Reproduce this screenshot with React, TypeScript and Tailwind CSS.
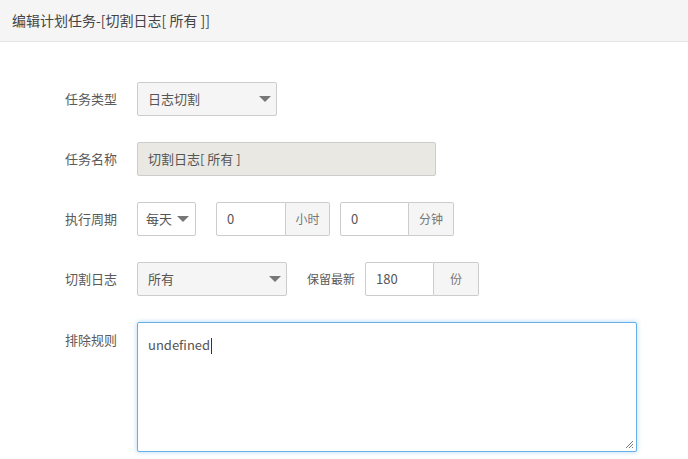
import React from "react";

const font = { fontFamily: '"Noto Sans CJK SC", "Open Sans", sans-serif' };

function Caret() {
  return (
    <svg width="12" height="6" viewBox="0 0 12 6" className="shrink-0">
      <path d="M0 0 L12 0 L6 6 Z" fill="#777" />
    </svg>
  );
}

function Label({ children }: { children: React.ReactNode }) {
  return (
    <div className="w-[72px] shrink-0 h-[34px] flex items-center text-[13px] text-[#5a5a5a]">
      {children}
    </div>
  );
}

function Select({ text, w }: { text: string; w: string }) {
  return (
    <div
      className={`${w} h-[34px] shrink-0 border border-[#ccc] rounded-[2px] bg-[#f5f5f5] flex items-center justify-between pl-[10px] pr-[5px] text-[13px] text-[#555]`}
    >
      <span>{text}</span>
      <Caret />
    </div>
  );
}

function InputGroup({ value, addon, iw, aw }: { value: string; addon: string; iw: string; aw: string }) {
  return (
    <div className="flex h-[34px] shrink-0">
      <div className={`${iw} h-full border border-[#ccc] rounded-l-[2px] bg-white flex items-center pl-[10px] text-[13px] text-[#555]`}>
        {value}
      </div>
      <div className={`${aw} h-full border border-l-0 border-[#ccc] rounded-r-[2px] bg-[#f5f5f5] flex items-center justify-center text-[12px] text-[#777]`}>
        {addon}
      </div>
    </div>
  );
}

export default function App() {
  return (
    <div className="w-[688px] h-[459px] bg-white overflow-hidden" style={font}>
      <div className="h-[42px] bg-[#f5f5f5] border-b border-[#e6e6e6] flex items-center pl-[12px] text-[14px] text-[#444]">
        编辑计划任务-[切割日志[ 所有 ]]
      </div>
      <div className="pt-[40px] pl-[65px] flex flex-col gap-[26px]">
        <div className="flex items-start">
          <Label>任务类型</Label>
          <Select text="日志切割" w="w-[140px]" />
        </div>
        <div className="flex items-start">
          <Label>任务名称</Label>
          <div className="w-[299px] h-[34px] border border-[#ccc] rounded-[2px] bg-[#e9e8e2] flex items-center pl-[10px] text-[13px] text-[#555]">
            切割日志[ 所有 ]
          </div>
        </div>
        <div className="flex items-start">
          <Label>执行周期</Label>
          <div className="flex items-center">
            <div className="w-[59px] h-[34px] border border-[#ccc] rounded-[2px] bg-white flex items-center pl-[8px] gap-[5px] text-[13px] text-[#555]">
              <span>每天</span>
              <Caret />
            </div>
            <div className="ml-[20px]">
              <InputGroup value="0" addon="小时" iw="w-[70px]" aw="w-[44px]" />
            </div>
            <div className="ml-[10px]">
              <InputGroup value="0" addon="分钟" iw="w-[69px]" aw="w-[45px]" />
            </div>
          </div>
        </div>
        <div className="flex items-start">
          <Label>切割日志</Label>
          <div className="flex items-center">
            <Select text="所有" w="w-[150px]" />
            <span className="ml-[20px] mr-[10px] text-[12px] text-[#5a5a5a]">保留最新</span>
            <InputGroup value="180" addon="份" iw="w-[69px]" aw="w-[45px]" />
          </div>
        </div>
        <div className="flex items-start">
          <div className="w-[72px] shrink-0 pt-[8px] text-[13px] text-[#5a5a5a]">排除规则</div>
          <div className="relative w-[500px] h-[130px] border border-[#66afe9] rounded-[2px] bg-white shadow-[0_0_5px_rgba(102,175,233,0.5)] pl-[10px] pt-[12px] text-[13px] text-[#555]">
            <span>undefined</span>
            <span className="inline-block w-px h-[16px] bg-[#333] align-middle ml-px"></span>
            <svg className="absolute right-[2px] bottom-[2px]" width="9" height="9" viewBox="0 0 9 9">
              <path d="M8 1 L1 8 M8 4 L4 8 M8 7 L7 8" stroke="#777" strokeWidth="1" />
            </svg>
          </div>
        </div>
      </div>
    </div>
  );
}
